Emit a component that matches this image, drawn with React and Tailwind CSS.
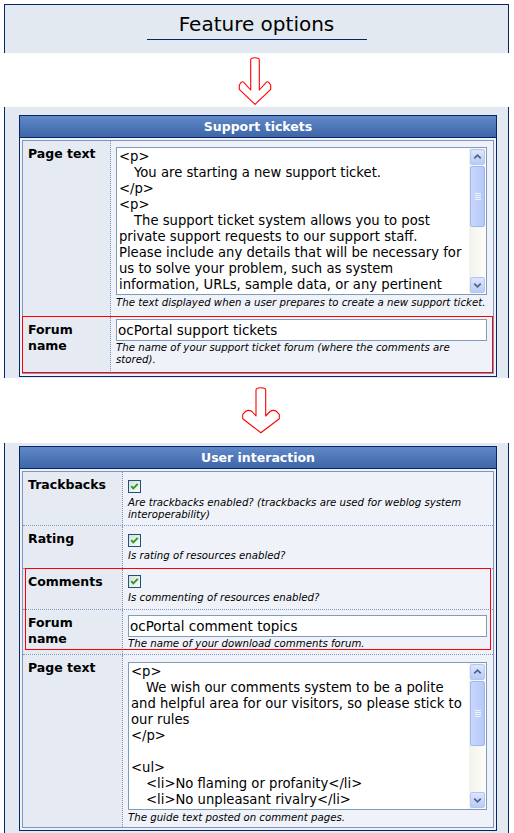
import React from 'react';

const NAVY = 'border-[#0a246a]';

function ArrowOne() {
  return (
    <svg width="34" height="48" viewBox="0 0 34 48" className="block">
      <path
        d="M12.7,33 L12.7,3 Q12.7,0.7 17,0.7 Q21.3,0.7 21.3,3 L21.3,33 L28.5,25.2 Q29.7,24.2 30.8,25.4 L32.7,28 L32.7,32.3 L17,47.3 L1.3,32.3 L1.3,28 L3.2,25.4 Q4.3,24.2 5.5,25.2 Z"
        fill="white"
        stroke="#ff0000"
        strokeWidth="1.1"
        strokeLinejoin="round"
      />
    </svg>
  );
}

function ArrowTwo() {
  return (
    <svg width="39" height="47" viewBox="0 0 39 47" className="block">
      <path
        d="M14,29 L14,3 Q14,0.7 18.85,0.7 Q23.7,0.7 23.7,3 L23.7,29 L28,24.5 Q31,22.5 34,24 L37.3,27.3 L37.3,31.7 L18.85,45.7 L0.7,31.7 L0.7,27.3 L4,24 Q7,22.5 10,24.5 Z"
        fill="white"
        stroke="#ff0000"
        strokeWidth="1.1"
        strokeLinejoin="round"
      />
    </svg>
  );
}

function Chevron({ up }) {
  return (
    <svg width="14" height="14" viewBox="0 0 14 14" className="block">
      <path
        d={up ? 'M3.5,8.5 L7,5 L10.5,8.5' : 'M3.5,5.5 L7,9 L10.5,5.5'}
        fill="none"
        stroke="#4d6185"
        strokeWidth="1.8"
      />
    </svg>
  );
}

function Scrollbar({ thumbH }) {
  return (
    <div className="w-[17px] shrink-0 flex flex-col bg-linear-to-r from-[#f3f2ec] to-[#fdfdfa] py-[1px]">
      <div className="mx-[1px] h-[16px] rounded-[2px] border border-[#b3c6f2] bg-linear-to-b from-[#dce6fe] to-[#b8cbf8] flex items-center justify-center">
        <Chevron up />
      </div>
      <div
        className="mx-[1px] mt-[1px] rounded-[2px] border border-[#9fb7ea] bg-linear-to-r from-[#c8d7fd] to-[#b5c9f8] flex flex-col items-center justify-center gap-[1px]"
        style={{ height: thumbH }}
      >
        <div className="h-px w-[6px] bg-[#eef3ff]" />
        <div className="h-px w-[6px] bg-[#eef3ff]" />
        <div className="h-px w-[6px] bg-[#eef3ff]" />
        <div className="h-px w-[6px] bg-[#eef3ff]" />
      </div>
      <div className="mt-auto mx-[1px] h-[16px] rounded-[2px] border border-[#b3c6f2] bg-linear-to-b from-[#dce6fe] to-[#b8cbf8] flex items-center justify-center">
        <Chevron />
      </div>
    </div>
  );
}

function TextArea({ lines, thumbH }) {
  return (
    <div className="flex h-[148px] border border-[#7f9db9] bg-white">
      <div className="flex-1 overflow-hidden pl-[2px] pt-[1px] text-[13.2px] leading-[16px] text-black whitespace-pre">
        {lines.map((l, i) => (
          <div key={i} className={l.indent ? 'pl-[15px]' : ''}>
            {l.t === '' ? '\u00a0' : l.t}
          </div>
        ))}
      </div>
      <Scrollbar thumbH={thumbH} />
    </div>
  );
}

function Input({ value }) {
  return (
    <div className="h-[22px] border border-[#7f9db9] bg-white pl-[1px] text-[13.5px] leading-[20px] whitespace-nowrap">
      {value}
    </div>
  );
}

function Check() {
  return (
    <svg width="13" height="13" viewBox="0 0 13 13" className="block">
      <defs>
        <linearGradient id="cbg" x1="0" y1="0" x2="1" y2="1">
          <stop offset="0" stopColor="#dcdcd7" />
          <stop offset="1" stopColor="#fbfbf9" />
        </linearGradient>
      </defs>
      <rect x="0.5" y="0.5" width="12" height="12" fill="url(#cbg)" stroke="#1c5180" />
      <path d="M3.2,6.2 L5.3,8.4 L9.8,3.8" fill="none" stroke="#21a121" strokeWidth="1.9" />
    </svg>
  );
}

function Desc({ children, className = '' }) {
  return (
    <div className={`text-[10.2px] leading-[12px] italic whitespace-nowrap ${className}`}>{children}</div>
  );
}

function Row({ label, labelW, valueCls, children, last }) {
  return (
    <div className={last ? 'flex' : 'flex border-b border-dotted border-[#7f97bd]'}>
      <div
        className={`${labelW} shrink-0 bg-[#e6ebf3] border-r border-dotted border-[#7f97bd] pl-[5px] pt-[5px] text-[12.5px] font-bold leading-[16px]`}
      >
        {label}
      </div>
      <div className={`flex-1 bg-[#eff3f9] pl-[5px] pr-[6px] ${valueCls}`}>{children}</div>
    </div>
  );
}

function Table({ title, children }) {
  return (
    <div className={`w-[478px] border ${NAVY} bg-[#eef2f8]`}>
      <div
        className={`h-[22px] border-b ${NAVY} bg-linear-to-b from-[#6189c8] to-[#3e66a8] text-center text-[12.5px] font-bold leading-[21px] text-white`}
      >
        {title}
      </div>
      <div className="p-[2px]">
        <div className="border border-[#7f97bd]">{children}</div>
      </div>
    </div>
  );
}

const supportLines = [
  { t: '<p>' },
  { t: 'You are starting a new support ticket.', indent: true },
  { t: '</p>' },
  { t: '<p>' },
  { t: 'The support ticket system allows you to post', indent: true },
  { t: 'private support requests to our support staff.' },
  { t: 'Please include any details that will be necessary for' },
  { t: 'us to solve your problem, such as system' },
  { t: 'information, URLs, sample data, or any pertinent' },
];

const commentLines = [
  { t: '<p>' },
  { t: 'We wish our comments system to be a polite', indent: true },
  { t: 'and helpful area for our visitors, so please stick to' },
  { t: 'our rules' },
  { t: '</p>' },
  { t: '' },
  { t: '<ul>' },
  { t: '<li>No flaming or profanity</li>', indent: true },
  { t: '<li>No unpleasant rivalry</li>', indent: true },
];

export default function App() {
  return (
    <div className="w-[514px] h-[833px] overflow-hidden bg-white text-black font-['DejaVu_Sans',sans-serif]">
      {/* Feature options heading panel */}
      <div
        className={`ml-[4px] mt-[4px] w-[505px] h-[49px] border-x border-t ${NAVY} bg-[#e3e9f1] flex flex-col items-center pt-[7px]`}
      >
        <div className="text-[20px] leading-[24px]">Feature options</div>
        <div className="mt-[3px] h-px w-[220px] bg-[#0a246a]" />
      </div>

      <div className="pl-[238px] pt-[4px] pb-[2px]">
        <ArrowOne />
      </div>

      {/* Support tickets panel */}
      <div className={`ml-[4px] w-[505px] border-x ${NAVY} bg-[#e3e9f1] pl-[14px] pt-[8px] pb-[1px]`}>
        <Table title="Support tickets">
          <Row label="Page text" labelW="w-[88px]" valueCls="pt-[6px] pb-[7px]">
            <TextArea lines={supportLines} thumbH={61} />
            <Desc className="mt-[2px]">
              The text displayed when a user prepares to create a new support ticket.
            </Desc>
          </Row>
          <div className="relative">
            <Row label={<>Forum<br />name</>} labelW="w-[88px]" valueCls="pt-[2px] pb-[7px]" last>
              <Input value="ocPortal support tickets" />
              <Desc className="mt-[1px]">
                The name of your support ticket forum (where the comments are
                <br />
                stored).
              </Desc>
            </Row>
            <div className="pointer-events-none absolute -left-px -top-px right-0 bottom-0 border border-[#ff0000]" />
          </div>
        </Table>
      </div>

      <div className="pl-[242px] pt-[9px] pb-[9px]">
        <ArrowTwo />
      </div>

      {/* User interaction panel */}
      <div className={`ml-[4px] w-[505px] border-x ${NAVY} bg-[#e3e9f1] pl-[14px] pt-[3px] pb-[4px]`}>
        <Table title="User interaction">
          <Row label="Trackbacks" labelW="w-[100px]" valueCls="pt-[8px] pb-[4px]">
            <Check />
            <Desc className="mt-[4px]">
              Are trackbacks enabled? (trackbacks are used for weblog system
              <br />
              interoperability)
            </Desc>
          </Row>
          <Row label="Rating" labelW="w-[100px]" valueCls="pt-[8px] pb-[6px]">
            <Check />
            <Desc className="mt-[3px]">Is rating of resources enabled?</Desc>
          </Row>
          <div className="relative">
            <Row label="Comments" labelW="w-[100px]" valueCls="pt-[6px] pb-[5px]">
              <Check />
              <Desc className="mt-[4px]">Is commenting of resources enabled?</Desc>
            </Row>
            <Row label={<>Forum<br />name</>} labelW="w-[100px]" valueCls="pt-[5px] pb-[4px]">
              <Input value="ocPortal comment topics" />
              <Desc className="mt-[1px]">The name of your download comments forum.</Desc>
            </Row>
            <div className="pointer-events-none absolute left-[2px] -top-px right-[2px] bottom-[5px] border border-[#ff0000]" />
          </div>
          <Row label="Page text" labelW="w-[100px]" valueCls="pt-[7px] pb-[3px]" last>
            <TextArea lines={commentLines} thumbH={65} />
            <Desc className="mt-[2px]">The guide text posted on comment pages.</Desc>
          </Row>
        </Table>
      </div>
    </div>
  );
}
